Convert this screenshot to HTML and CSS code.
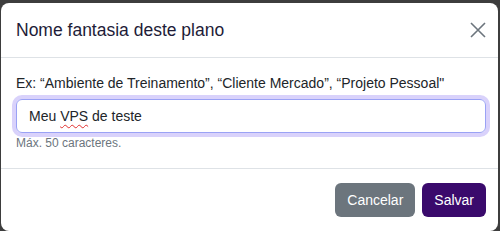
FILE: index.html
```html
<!DOCTYPE html>
<html lang="pt-BR">
<head>
    <meta charset="UTF-8">
    <title>Nome fantasia deste plano</title>
    <link rel="stylesheet" href="styles.css">
</head>
<body>
    <div class="modal">
        <div class="modal-header">
            <h5 class="modal-title">Nome fantasia deste plano</h5>
            <button class="btn-close" aria-label="Fechar">
                <svg width="16" height="16" viewBox="0 0 16 16">
                    <path d="M1 1 L15 15 M15 1 L1 15" stroke="#6c757d" stroke-width="1.6" fill="none"/>
                </svg>
            </button>
        </div>

        <div class="modal-body">
            <label class="form-label">Ex: “Ambiente de Treinamento”, “Cliente Mercado”, “Projeto Pessoal"</label>
            <div class="form-control">Meu <span class="misspelled">VPS</span> de teste</div>
            <div class="form-text">Máx. 50 caracteres.</div>
        </div>

        <div class="modal-footer">
            <button class="btn btn-secondary">Cancelar</button>
            <button class="btn btn-primary">Salvar</button>
        </div>
    </div>
</body>
</html>
```

FILE: styles.css
```css
* {
    box-sizing: border-box;
    margin: 0;
    padding: 0;
}

body {
    background-color: #3d3d3d;
    font-family: 'Liberation Sans', Arial, sans-serif;
    font-size: 14px;
    color: #212529;
    padding: 3px 2px 0 1px;
    height: 231px;
    overflow: hidden;
}

.modal {
    background-color: #fff;
    border-radius: 8px;
    height: 228px;
}

.modal-header {
    display: flex;
    align-items: center;
    justify-content: space-between;
    padding: 12px 12px 12px 15px;
    border-bottom: 1px solid #dee2e6;
}

.modal-title {
    font-size: 17.5px;
    font-weight: 400;
    line-height: 30px;
    color: #1e1c38;
}

.btn-close {
    border: none;
    background: none;
    width: 16px;
    height: 16px;
    display: flex;
}

.modal-body {
    padding: 15px 12px 16px 15px;
}

.form-label {
    display: block;
    line-height: 20px;
    margin-bottom: 6px;
}

.form-control {
    height: 34px;
    padding: 6px 12px;
    line-height: 20px;
    border: 1px solid #9aa2f5;
    border-radius: 6px;
    box-shadow: 0 0 0 4px #d9d2fb;
    color: #212529;
}

.misspelled {
    text-decoration: underline wavy #e03030;
    text-decoration-thickness: 1px;
    text-underline-offset: 3px;
}

.form-text {
    margin-top: 1px;
    font-size: 12px;
    line-height: 18px;
    color: #6c757d;
}

.modal-footer {
    display: flex;
    justify-content: flex-end;
    gap: 7px;
    padding: 14px 12px 13px;
    border-top: 1px solid #dee2e6;
}

.btn {
    font-family: inherit;
    font-size: 14px;
    line-height: 20px;
    padding: 7px 12px;
    border: none;
    border-radius: 6px;
    color: #fff;
}

.btn-secondary {
    background-color: #6c757d;
}

.btn-primary {
    background-color: #3a0a6c;
}
```
